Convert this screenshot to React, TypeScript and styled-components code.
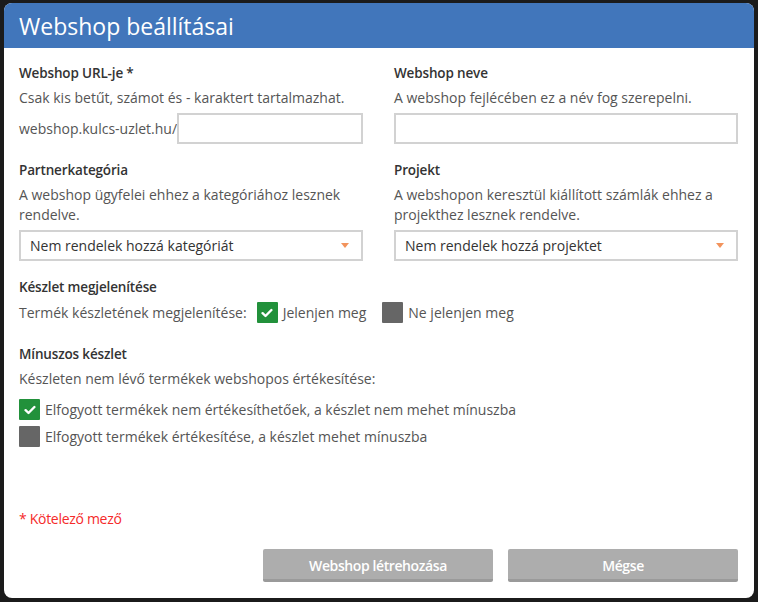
import React from "react";
import styled, { createGlobalStyle } from "styled-components";

const Global = createGlobalStyle`
  html, body { margin: 0; padding: 0; background: #1b1b1b; }
  body { font-family: "Open Sans", "Noto Sans", sans-serif; }
  * { box-sizing: border-box; }
`;

const Page = styled.div`
  padding: 3px 4px 4px 4px;
  height: 602px;
`;

const Dialog = styled.div`
  width: 750px;
  height: 595px;
  background: #fff;
  border-radius: 8px;
  overflow: hidden;
  display: flex;
  flex-direction: column;
`;

const Header = styled.div`
  height: 45px;
  background: #4176bb;
  color: #fff;
  display: flex;
  align-items: center;
  padding: 0 15px;
  font-size: 23px;
  font-weight: 400;
`;

const Body = styled.div`
  flex: 1;
  display: flex;
  flex-direction: column;
  padding: 15px 16px 16px 15px;
`;

const Columns = styled.div`
  display: grid;
  grid-template-columns: 344px 344px;
  column-gap: 31px;
  row-gap: 16px;
`;

const Section = styled.div<{ $mt?: number; $mb?: number }>`
  margin-top: ${(p) => p.$mt ?? 0}px;
  margin-bottom: ${(p) => p.$mb ?? 0}px;
`;

const Label = styled.div`
  font-size: 13.5px;
  font-weight: 600;
  letter-spacing: -0.15px;
  color: #333;
  line-height: 20px;
  margin-bottom: 5px;
`;

const Desc = styled.div`
  font-size: 14px;
  color: #555;
  line-height: 20px;
  margin-bottom: 5px;
`;

const UrlRow = styled.div`
  display: flex;
  align-items: center;
  font-size: 14px;
  color: #555;
`;

const Input = styled.input`
  height: 31px;
  border: 2px solid #d2d2d2;
  outline: none;
  background: #fff;
  flex: 1;
  width: 100%;
  margin: 0;
  font: inherit;
`;

const Select = styled.div`
  height: 31px;
  border: 2px solid #d2d2d2;
  display: flex;
  align-items: center;
  justify-content: space-between;
  padding: 0 12px 0 9px;
  font-size: 14px;
  color: #333;
`;

const Arrow = styled.span`
  width: 0;
  height: 0;
  border-left: 4px solid transparent;
  border-right: 4px solid transparent;
  border-top: 5px solid #f2935c;
`;

const InlineRow = styled.div`
  display: flex;
  align-items: center;
  font-size: 14px;
  color: #555;
  height: 21px;
`;

const Box = styled.span<{ $checked?: boolean }>`
  width: 21px;
  height: 21px;
  border-radius: 1px;
  background: ${(p) => (p.$checked ? "#22913b" : "#666")};
  display: inline-flex;
  align-items: center;
  justify-content: center;
  flex-shrink: 0;
`;

const Option = styled.span<{ $ml?: number }>`
  display: inline-flex;
  align-items: center;
  gap: 5px;
  margin-left: ${(p) => p.$ml ?? 0}px;
`;

const CheckList = styled.div`
  display: flex;
  flex-direction: column;
  gap: 6px;
  margin-top: 10px;
`;

const Required = styled.div`
  margin-top: auto;
  font-size: 14px;
  color: #f52a2a;
  line-height: 20px;
  margin-bottom: 20px;
  letter-spacing: -0.3px;
`;

const Footer = styled.div`
  display: flex;
  justify-content: flex-end;
  gap: 15px;
`;

const Button = styled.button`
  width: 230px;
  height: 33px;
  background: #adadad;
  border: none;
  border-bottom: 3px solid #9a9a9a;
  border-radius: 2px;
  color: #fff;
  font-family: "Open Sans", sans-serif;
  font-size: 14px;
  font-weight: 600;
  letter-spacing: -0.4px;
  padding: 2px 0 0 0;
`;

const Check = () => (
  <svg width="12" height="10" viewBox="0 0 12 10">
    <path d="M1.6 5.2 L4.5 8 L10.4 2" stroke="#fff" strokeWidth="2.4" fill="none" strokeLinecap="round" strokeLinejoin="round" />
  </svg>
);

export default function App() {
  return (
    <>
      <Global />
      <Page>
        <Dialog>
          <Header>Webshop beállításai</Header>
          <Body>
            <Columns>
              <Section>
                <Label>Webshop URL-je *</Label>
                <Desc>Csak kis betűt, számot és - karaktert tartalmazhat.</Desc>
                <UrlRow>
                  webshop.kulcs-uzlet.hu/
                  <Input />
                </UrlRow>
              </Section>
              <Section>
                <Label>Webshop neve</Label>
                <Desc>A webshop fejlécében ez a név fog szerepelni.</Desc>
                <UrlRow>
                  <Input />
                </UrlRow>
              </Section>
              <Section>
                <Label>Partnerkategória</Label>
                <Desc>A webshop ügyfelei ehhez a kategóriához lesznek rendelve.</Desc>
                <Select>
                  Nem rendelek hozzá kategóriát
                  <Arrow />
                </Select>
              </Section>
              <Section>
                <Label>Projekt</Label>
                <Desc>A webshopon keresztül kiállított számlák ehhez a projekthez lesznek rendelve.</Desc>
                <Select>
                  Nem rendelek hozzá projektet
                  <Arrow />
                </Select>
              </Section>
            </Columns>
            <Section $mt={16} $mb={21}>
              <Label>Készlet megjelenítése</Label>
              <InlineRow>
                Termék készletének megjelenítése:
                <Option $ml={10}>
                  <Box $checked>
                    <Check />
                  </Box>
                  Jelenjen meg
                </Option>
                <Option $ml={16}>
                  <Box />
                  Ne jelenjen meg
                </Option>
              </InlineRow>
            </Section>
            <Section>
              <Label>Mínuszos készlet</Label>
              <Desc>Készleten nem lévő termékek webshopos értékesítése:</Desc>
              <CheckList>
                <InlineRow>
                  <Option>
                    <Box $checked>
                      <Check />
                    </Box>
                    Elfogyott termékek nem értékesíthetőek, a készlet nem mehet mínuszba
                  </Option>
                </InlineRow>
                <InlineRow>
                  <Option>
                    <Box />
                    Elfogyott termékek értékesítése, a készlet mehet mínuszba
                  </Option>
                </InlineRow>
              </CheckList>
            </Section>
            <Required>* Kötelező mező</Required>
            <Footer>
              <Button>Webshop létrehozása</Button>
              <Button>Mégse</Button>
            </Footer>
          </Body>
        </Dialog>
      </Page>
    </>
  );
}
